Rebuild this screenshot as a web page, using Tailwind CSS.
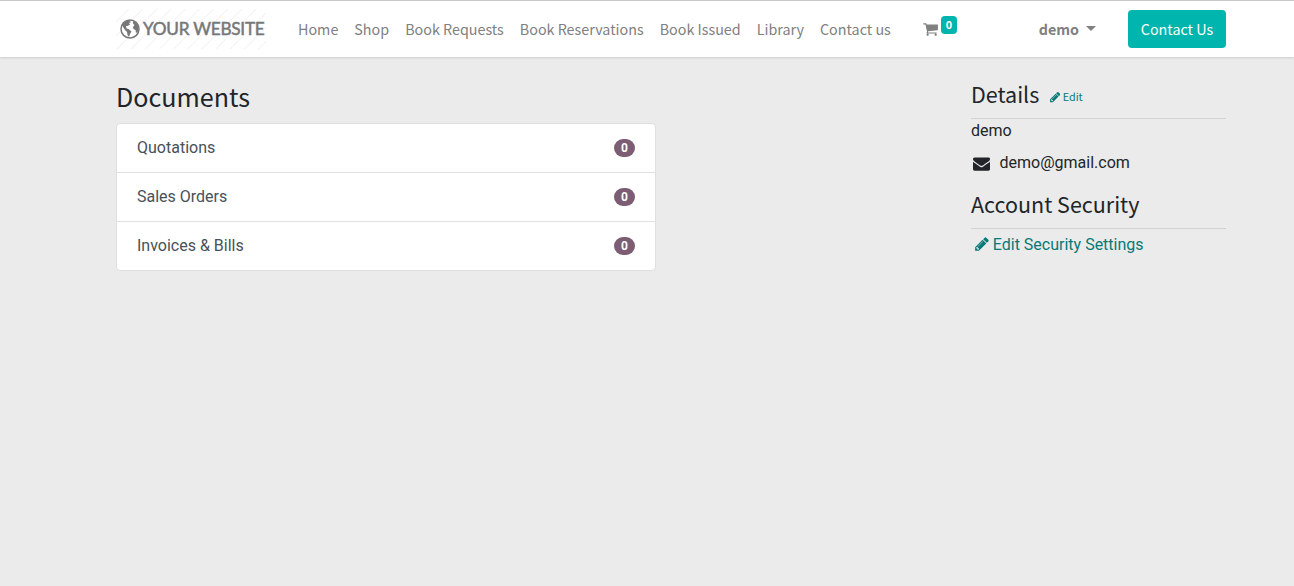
<!DOCTYPE html>
<html lang="en">
<head>
<meta charset="utf-8">
<title>Documents</title>
<script src="https://cdn.jsdelivr.net/npm/@tailwindcss/browser@4"></script>
</head>
<body class="h-screen overflow-hidden bg-[#ebebeb] font-['Roboto',sans-serif] text-base text-[#212529]">
<svg class="hidden">
  <symbol id="pencil" viewBox="0 0 1536 1792"><path d="M363 1408l91-91-235-235-91 91v107h128v128h107zM886 480q0-22-22-22-10 0-17 7l-542 542q-7 7-7 17 0 22 22 22 10 0 17-7l542-542q7-7 7-17zM832 288l416 416-832 832H0v-416zM1515 384q0 53-37 90l-166 166-416-416 166-165q36-38 90-38 53 0 91 38l235 234q37 39 37 91z" transform="translate(0 128)"/></symbol>
</svg>
<header class="h-[57px] border-t border-[#c8c8c8] bg-white shadow-[0_1px_2px_rgba(0,0,0,0.12)]">
  <div class="ml-[116px] flex h-14 w-[1110px] items-center font-['Noto_Sans_CJK_SC',sans-serif] text-gray-500">
    <a class="flex h-10 w-[150px] shrink-0 items-center bg-[repeating-linear-gradient(135deg,#fff_0px,#fff_8px,#f3f3f3_9px,#fff_10px)] pl-1 text-[#777]">
      <svg class="mt-[-1px] h-5 w-5 shrink-0" viewBox="0 0 20 20"><circle cx="10" cy="10" r="9" fill="#fff" stroke="#777" stroke-width="1.500"/><path fill="#777" d="M2 6Q4 2 9 1.500L11 3 9 4 10 5.500 7.500 7 6 7 6.500 9.500 8.500 10 11.500 12.500 10 15 9 18 7.500 16 7 13 5 11 3 8ZM13 2Q17 3.500 18.500 8L18 12.500 16 14 15.500 11 13.500 10 13 8 14.500 6 13 4.500Z"/></svg>
      <span class="ml-[3px] whitespace-nowrap font-['Lato',sans-serif] text-[17.200px] leading-5 tracking-[-0.250px] [-webkit-text-stroke:0.5px_#777]">YOUR WEBSITE</span>
    </a>
    <nav class="ml-6 flex shrink-0 whitespace-nowrap text-[14.340px] leading-6 text-[#808080]">
      <a class="px-2">Home</a><a class="px-2">Shop</a><a class="px-2">Book Requests</a><a class="px-2">Book Reservations</a><a class="px-2">Book Issued</a><a class="px-2">Library</a><a class="px-2">Contact us</a>
    </nav>
    <a class="ml-6 flex shrink-0 items-center">
      <svg class="h-4 w-[15px]" viewBox="0 0 1664 1792" fill="#808080"><path d="M640 1536q0 52-38 90t-90 38-90-38-38-90 38-90 90-38 90 38 38 90zM1536 1536q0 52-38 90t-90 38-90-38-38-90 38-90 90-38 90 38 38 90zM1664 448v512q0 24-16.500 42.500T1607 1024L563 1146q13 60 13 70 0 16-24 64h920q26 0 45 19t19 45-19 45-45 19H448q-26 0-45-19t-19-45q0-11 8-31.500t16-36 21.500-40T445 1207L268 384H64q-26 0-45-19T0 320t19-45 45-19h256q16 0 28.500 6.500T368 278t13 24.500 8 26 5.500 29.500 4.500 26h1201q26 0 45 19t19 45z"/></svg>
      <span class="mb-[8px] ml-[3px] flex h-[18px] w-4 items-center justify-center rounded bg-[#00b5ad] text-[10.750px] font-bold leading-3 text-white">0</span>
    </a>
    <a class="ml-auto flex items-center text-[14.340px] font-bold leading-6 text-[#808080]">demo<span class="mb-[2px] ml-[7px] border-x-[5px] border-t-[5px] border-x-transparent border-t-[#808080]"></span></a>
    <a class="ml-8 flex h-[38px] w-[98px] shrink-0 items-center justify-center rounded bg-[#00b5ad] text-[14.340px] leading-6 text-white">Contact Us</a>
  </div>
</header>
<main class="ml-[116px] flex w-[1110px] justify-between">
  <section class="w-[540px]">
    <h3 class="mt-[22px] h-[36px] font-['Noto_Sans_CJK_SC',sans-serif] text-[25.100px] leading-[34px]">Documents</h3>
    <div class="mt-2 divide-y divide-[#dfdfdf] rounded border border-[#dfdfdf] bg-white text-[#495057]">
      <a class="flex h-[49px] items-center justify-between px-5"><span>Quotations</span><span class="flex h-[18px] w-[21px] items-center justify-center rounded-full bg-[#7c5d73] text-[12px] font-bold leading-3 text-white">0</span></a>
      <a class="flex h-[49px] items-center justify-between px-5"><span>Sales Orders</span><span class="flex h-[18px] w-[21px] items-center justify-center rounded-full bg-[#7c5d73] text-[12px] font-bold leading-3 text-white">0</span></a>
      <a class="flex h-[48px] items-center justify-between px-5"><span>Invoices &amp; Bills</span><span class="flex h-[18px] w-[21px] items-center justify-center rounded-full bg-[#7c5d73] text-[12px] font-bold leading-3 text-white">0</span></a>
    </div>
  </section>
  <aside class="w-[255px]">
    <div class="mt-[23px] flex h-[39px] items-start border-b border-[#d2d2d2] font-['Noto_Sans_CJK_SC',sans-serif]">
      <h4 class="text-[21.500px] leading-[28px]">Details</h4>
      <a class="ml-[11px] mt-[9px] flex items-center text-[10.750px] leading-4 text-[#067a76]"><svg class="mr-[2px] h-[12px] w-[10.500px]" fill="currentColor"><use href="#pencil"/></svg>Edit</a>
    </div>
    <p class="leading-6">demo</p>
    <p class="mt-2 flex items-center leading-6"><svg class="ml-[2px] mr-[9.500px] mt-[1px] h-[17px] w-[17px]" viewBox="0 0 1792 1792" fill="currentColor"><path d="M1792 710v794q0 66-47 113t-113 47H160q-66 0-113-47T0 1504V710q44 49 101 87 362 246 497 345 57 42 92.500 65.500t94.500 48 110 24.500h2q51 0 110-24.500t94.500-48 92.500-65.500q170-123 498-345 57-39 100-87zM1792 416q0 79-49 151t-122 123q-376 261-468 325-10 7-42.500 31t-54 38.500-52 32.500-57.500 27-50 9h-2q-23 0-50-9t-57.500-27-52-32.500-54-38.500-42.500-31q-91-64-262-182.500T172 690q-62-42-117-115.500T0 438q0-78 41.500-130T160 256h1472q65 0 112.500 47t47.500 113z"/></svg>demo@gmail.com</p>
    <h4 class="mt-[15px] h-[39px] border-b border-[#d2d2d2] font-['Noto_Sans_CJK_SC',sans-serif] text-[21.500px] leading-[28px]">Account Security</h4>
    <a class="mt-[4px] flex items-center pl-1 leading-6 text-[#067a76]"><svg class="mr-[3.800px] mb-[2px] h-4 w-[14px]" fill="currentColor"><use href="#pencil"/></svg>Edit Security Settings</a>
  </aside>
</main>
</body>
</html>
